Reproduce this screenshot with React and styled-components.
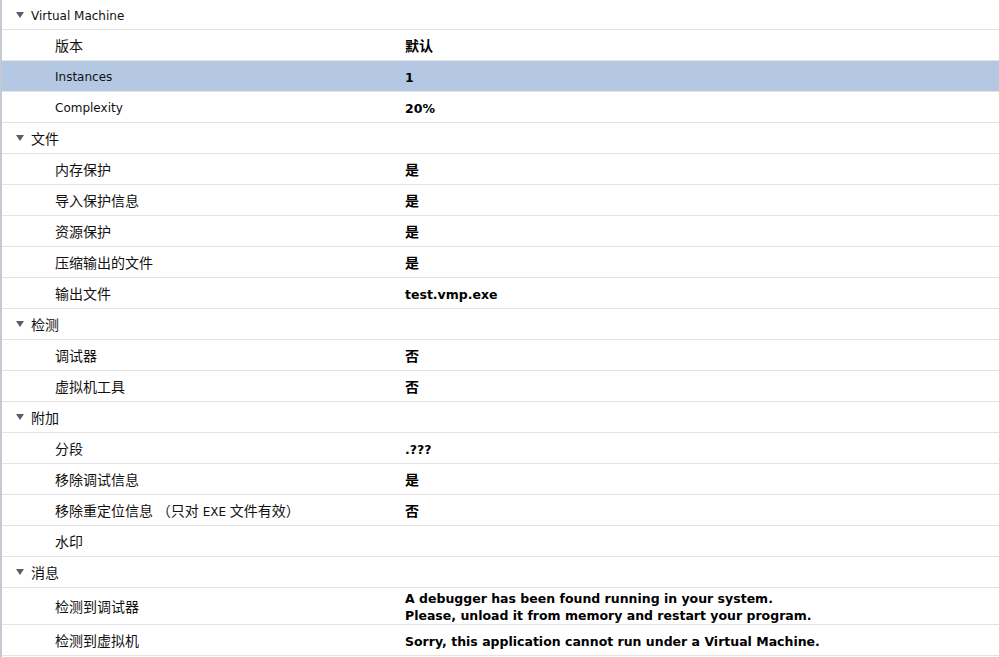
import React from "react";
import styled, { createGlobalStyle } from "styled-components";

const GlobalStyle = createGlobalStyle`
  html, body {
    margin: 0;
    padding: 0;
    background: #ffffff;
  }
  body {
    font-family: "DejaVu Sans", "Noto Sans CJK SC", sans-serif;
    font-size: 12px;
    color: #000;
  }
`;

const Tree = styled.div`
  width: 999px;
  height: 657px;
  overflow: hidden;
  box-sizing: border-box;
  border-left: 2px solid #c3cad4;
  background: #fff;
`;

const Row = styled.div`
  display: grid;
  grid-template-columns: ${(p) => (p.$group ? "1fr" : "403px 1fr")};
  align-items: center;
  box-sizing: border-box;
  padding-top: 2px;
  height: ${(p) => (p.$h || 30) + 1}px;
  border-bottom: 1px solid #e3e3e3;
  background: ${(p) => (p.$selected ? "#b4c8e4" : "transparent")};
`;

const GroupTitle = styled.div`
  display: flex;
  align-items: center;
  gap: 7px;
  padding-left: 14px;
  color: #111;
`;

const Arrow = styled.span`
  width: 0;
  height: 0;
  border-left: 4px solid transparent;
  border-right: 4px solid transparent;
  border-top: 6px solid #5a5f66;
  margin-top: -2px;
`;

const Label = styled.div`
  padding-left: 53px;
  color: #111;
  white-space: nowrap;
`;

const Value = styled.div`
  font-weight: bold;
  font-size: 12.5px;
  line-height: 17px;
  white-space: pre-line;
  color: #000;
`;

const Han = styled.span`
  font-family: "Noto Sans CJK SC", sans-serif;
  font-size: 14px;
  line-height: 1;
`;

const hanRe = /([\u3000-\u303f\u4e00-\u9fff\uff00-\uffef]+)/;

const Text = ({ children }) =>
  String(children)
    .split(hanRe)
    .map((part, i) => (hanRe.test(part) ? <Han key={i}>{part}</Han> : part));

const groups = [
  {
    title: "Virtual Machine",
    first: true,
    items: [
      ["版本", "默认"],
      ["Instances", "1", true],
      ["Complexity", "20%"],
    ],
  },
  {
    title: "文件",
    items: [
      ["内存保护", "是"],
      ["导入保护信息", "是"],
      ["资源保护", "是"],
      ["压缩输出的文件", "是"],
      ["输出文件", "test.vmp.exe"],
    ],
  },
  {
    title: "检测",
    items: [
      ["调试器", "否"],
      ["虚拟机工具", "否"],
    ],
  },
  {
    title: "附加",
    items: [
      ["分段", ".???"],
      ["移除调试信息", "是"],
      ["移除重定位信息 （只对 EXE 文件有效）", "否"],
      ["水印", ""],
    ],
  },
  {
    title: "消息",
    items: [
      [
        "检测到调试器",
        "A debugger has been found running in your system.\nPlease, unload it from memory and restart your program.",
        false,
        36,
      ],
      ["检测到虚拟机", "Sorry, this application cannot run under a Virtual Machine."],
    ],
  },
];

const App = () => {
  return (
    <>
      <GlobalStyle />
      <Tree>
        {groups.map((g) => (
          <React.Fragment key={g.title}>
            <Row $group $h={g.first ? 29 : 30}>
              <GroupTitle>
                <Arrow />
                <span>
                  <Text>{g.title}</Text>
                </span>
              </GroupTitle>
            </Row>
            {g.items.map(([label, value, selected, h]) => (
              <Row key={label} $selected={selected} $h={h}>
                <Label>
                  <Text>{label}</Text>
                </Label>
                <Value>
                  <Text>{value}</Text>
                </Value>
              </Row>
            ))}
          </React.Fragment>
        ))}
      </Tree>
    </>
  );
};

export default App;
